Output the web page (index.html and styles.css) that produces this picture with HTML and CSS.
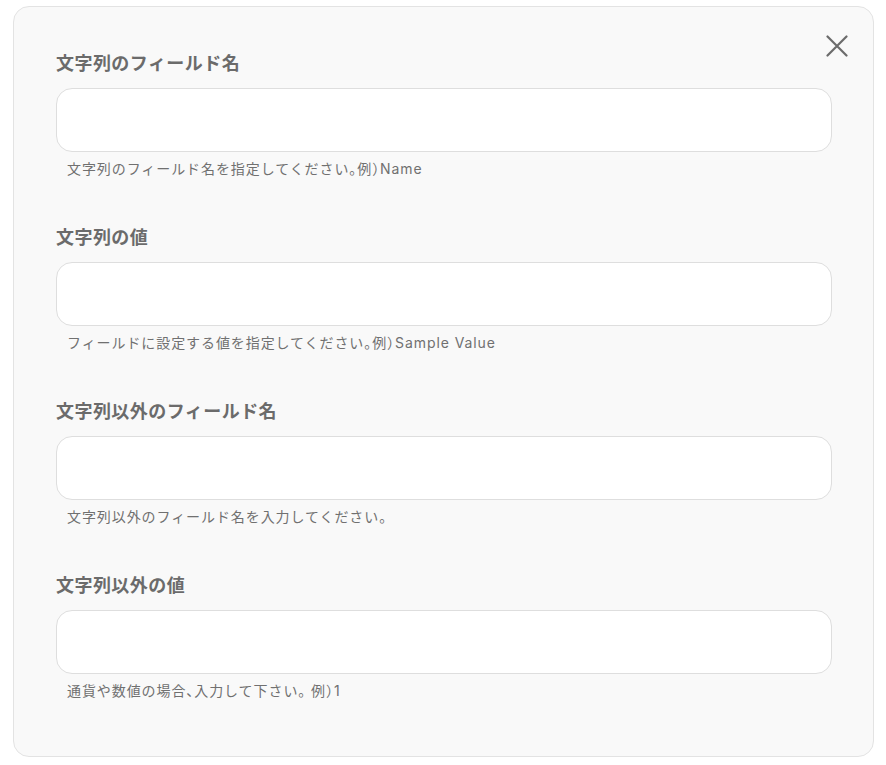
FILE: index.html
```html
<!DOCTYPE html>
<html lang="ja">
<head>
<meta charset="utf-8">
<title>フィールド設定</title>
<link rel="stylesheet" href="styles.css">
</head>
<body>
<div class="panel">
  <button class="close" type="button" aria-label="閉じる">
    <svg width="22" height="22" viewBox="0 0 22 22"><path d="M1.5 1.5 L20.5 20.5 M20.5 1.5 L1.5 20.5" stroke="#6b6b6b" stroke-width="2.2" stroke-linecap="round" fill="none"/></svg>
  </button>
  <div class="field">
    <label class="label">文字列のフィールド名</label>
    <input class="input" type="text">
    <p class="help">文字列のフィールド名を指定してください。例）Name</p>
  </div>
  <div class="field">
    <label class="label">文字列の値</label>
    <input class="input" type="text">
    <p class="help">フィールドに設定する値を指定してください。例）Sample Value</p>
  </div>
  <div class="field">
    <label class="label">文字列以外のフィールド名</label>
    <input class="input" type="text">
    <p class="help">文字列以外のフィールド名を入力してください。</p>
  </div>
  <div class="field">
    <label class="label">文字列以外の値</label>
    <input class="input" type="text">
    <p class="help">通貨や数値の場合、入力して下さい。 例）1</p>
  </div>
</div>
</body>
</html>
```
FILE: styles.css
```css
html, body {
  margin: 0;
  background: #ffffff;
}
body {
  font-family: Inter, "Noto Sans CJK JP", sans-serif;
  color: #6b6b6b;
}
.panel {
  position: relative;
  box-sizing: border-box;
  margin: 6px 0 0 13px;
  width: 861px;
  height: 751px;
  padding: 44px 41px 0 42px;
  background: #f9f9f9;
  border: 1px solid #e3e3e3;
  border-radius: 16px;
  display: flex;
  flex-direction: column;
  gap: 46px;
}
.close {
  position: absolute;
  top: 28px;
  right: 25px;
  padding: 0;
  border: 0;
  background: none;
  width: 22px;
  height: 22px;
  cursor: pointer;
}
.field {
  display: flex;
  flex-direction: column;
}
.label {
  font-size: 18px;
  font-weight: 700;
  line-height: 26px;
  letter-spacing: 0.45px;
  color: #6b6b6b;
}
.input {
  box-sizing: border-box;
  margin-top: 11px;
  height: 64px;
  width: 100%;
  border: 1px solid #dedede;
  border-radius: 16px;
  background: #ffffff;
  outline: none;
}
.help {
  margin: 7px 0 0 11px;
  font-size: 14px;
  line-height: 20px;
  letter-spacing: 0.92px;
  font-feature-settings: "halt";
  color: #707070;
}
```
